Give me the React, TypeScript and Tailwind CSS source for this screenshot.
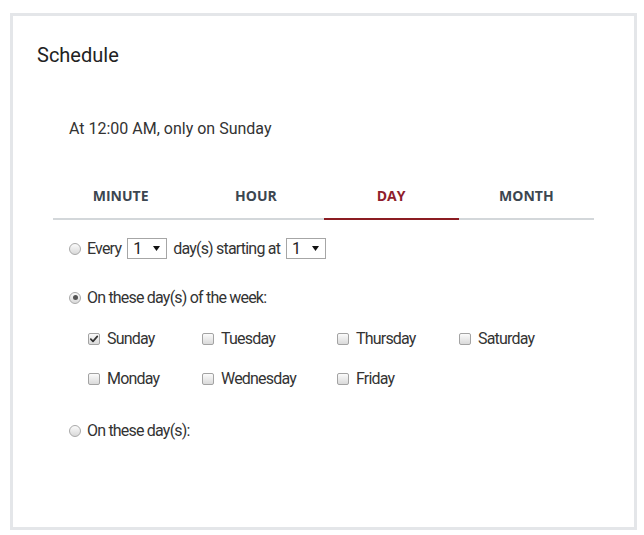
import React from "react";

const optFont = { fontFamily: "Roboto, 'Noto Sans', sans-serif" };

function Radio({ checked }: { checked?: boolean }) {
  return (
    <span className="relative inline-flex h-[12px] w-[12px] shrink-0 items-center justify-center rounded-full border border-[#a9a9a9] bg-linear-to-b from-[#fbfbfb] to-[#d9d9d9]">
      {checked && <span className="h-[5px] w-[5px] rounded-full bg-[#555]" />}
    </span>
  );
}

function Check({ checked }: { checked?: boolean }) {
  return (
    <span className="inline-flex h-[12px] w-[12px] shrink-0 items-center justify-center rounded-[2px] border border-[#a3a3a3] bg-linear-to-b from-[#fbfbfb] to-[#dadada]">
      {checked && (
        <svg width="10" height="10" viewBox="0 0 10 10">
          <path d="M1.8 5.2 L4 7.4 L8.3 2.4" fill="none" stroke="#333" strokeWidth="1.7" strokeLinecap="round" strokeLinejoin="round" />
        </svg>
      )}
    </span>
  );
}

function Select({ value }: { value: string }) {
  return (
    <span className="inline-flex h-[21px] w-[40px] items-center justify-between border border-[#a6a6a6] bg-white pl-[5px] pr-[6px] text-[16px] leading-[19px] text-[#222]">
      <span>{value}</span>
      <svg width="7" height="5" viewBox="0 0 7 5">
        <path d="M0 0 L7 0 L3.5 5 Z" fill="#111" />
      </svg>
    </span>
  );
}

function Day({ label, checked }: { label: string; checked?: boolean }) {
  return (
    <div className="flex h-[21px] items-center gap-[7px]">
      <Check checked={checked} />
      <span>{label}</span>
    </div>
  );
}

export default function App() {
  const tabs = ["MINUTE", "HOUR", "DAY", "MONTH"];
  return (
    <div className="min-h-[535px] w-[644px] bg-white pl-[10px] pt-[13px]" style={optFont}>
      <div className="h-[517px] w-[627px] border-[3px] border-[#e4e6e9] bg-white">
        <div className="pl-[24px] pt-[25px] text-[20px] leading-[28px] text-[#222]">Schedule</div>
        <div className="mt-[48px] pl-[56px] text-[16px] leading-[24px] text-[#333]">
          At 12:00 AM, only on Sunday
        </div>
        <div
          className="mx-[40px] mt-[35px] flex border-b-2 border-[#d3d7da]"
          style={{ fontFamily: "'Open Sans', Roboto, sans-serif" }}
        >
          {tabs.map((t) => (
            <div
              key={t}
              className={
                t === "DAY"
                  ? "-mb-[2px] flex-1 border-b-2 border-[#8b1c22] pb-[12px] pt-[10px] text-center text-[14px] font-bold leading-[20px] text-[#8f1d2c]"
                  : "-mb-[2px] flex-1 border-b-2 border-transparent pb-[12px] pt-[10px] text-center text-[14px] font-bold leading-[20px] text-[#3c4650]"
              }
            >
              {t}
            </div>
          ))}
        </div>

        <div className="text-[16px] leading-[21px] tracking-[-0.8px] text-[#333]">
          <div className="mt-[18px] flex h-[21px] items-center pl-[56px]">
            <Radio />
            <span className="ml-[6px]">Every</span>
            <span className="ml-[6px] tracking-normal">
              <Select value="1" />
            </span>
            <span className="ml-[6px]">day(s) starting at</span>
            <span className="ml-[6px] tracking-normal">
              <Select value="1" />
            </span>
          </div>

          <div className="mt-[28px] flex h-[21px] items-center pl-[56px]">
            <Radio checked />
            <span className="ml-[6px]">On these day(s) of the week:</span>
          </div>

          <div className="mt-[20px] grid grid-cols-[114px_135px_122px_auto] gap-y-[19px] pl-[75px]">
            <Day label="Sunday" checked />
            <Day label="Tuesday" />
            <Day label="Thursday" />
            <Day label="Saturday" />
            <Day label="Monday" />
            <Day label="Wednesday" />
            <Day label="Friday" />
          </div>

          <div className="mt-[31px] flex h-[21px] items-center pl-[56px]">
            <Radio />
            <span className="ml-[6px]">On these day(s):</span>
          </div>
        </div>
      </div>
    </div>
  );
}
